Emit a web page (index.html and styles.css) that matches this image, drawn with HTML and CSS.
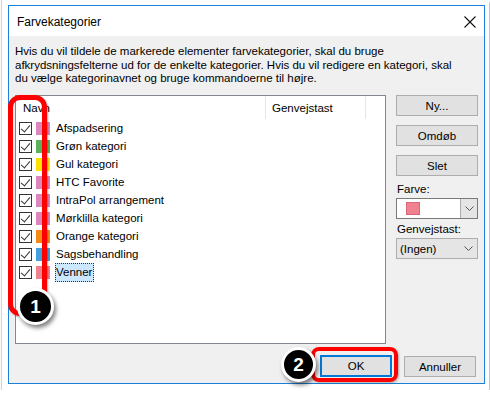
FILE: index.html
```html
<!DOCTYPE html>
<html lang="da">

<head>
    <meta charset="UTF-8" />
    <meta name="viewport" content="width=device-width, initial-scale=1.0" />
    <title>Farvekategorier</title>
    <link rel="stylesheet" href="styles.css">
</head>

<body>
    <div class="shot">
        <div class="dialog">
            <!-- Title bar -->
            <div class="titlebar">
                <span class="title">Farvekategorier</span>
                <svg class="close" width="12" height="12" viewBox="0 0 12 12">
                    <path d="M0.5 0.5 L11.5 11.5 M11.5 0.5 L0.5 11.5" stroke="#111" stroke-width="1.1" fill="none" />
                </svg>
            </div>

            <div class="content">
                <p class="intro">Hvis du vil tildele de markerede elementer farvekategorier, skal du bruge<br>
                    afkrydsningsfelterne ud for de enkelte kategorier. Hvis du vil redigere en kategori, skal<br>
                    du vælge kategorinavnet og bruge kommandoerne til højre.</p>

                <div class="main">
                    <!-- Category list -->
                    <div class="listbox">
                        <div class="list-header">
                            <span class="col-name">Navn</span>
                            <span class="col-key">Genvejstast</span>
                            <span class="col-rest"></span>
                        </div>
                        <ul class="rows">
                            <li class="row"><span class="check"></span><span class="swatch pink"></span><span class="label">Afspadsering</span></li>
                            <li class="row"><span class="check"></span><span class="swatch green"></span><span class="label">Grøn kategori</span></li>
                            <li class="row"><span class="check"></span><span class="swatch yellow"></span><span class="label">Gul kategori</span></li>
                            <li class="row"><span class="check"></span><span class="swatch pink"></span><span class="label">HTC Favorite</span></li>
                            <li class="row"><span class="check"></span><span class="swatch pink"></span><span class="label">IntraPol arrangement</span></li>
                            <li class="row"><span class="check"></span><span class="swatch pink"></span><span class="label">Mørklilla kategori</span></li>
                            <li class="row"><span class="check"></span><span class="swatch orange"></span><span class="label">Orange kategori</span></li>
                            <li class="row"><span class="check"></span><span class="swatch blue"></span><span class="label">Sagsbehandling</span></li>
                            <li class="row"><span class="check"></span><span class="swatch salmon"></span><span class="label selected">Venner</span></li>
                        </ul>
                    </div>

                    <!-- Commands -->
                    <div class="side">
                        <button class="btn">Ny...</button>
                        <button class="btn">Omdøb</button>
                        <button class="btn">Slet</button>
                        <label class="field-label">Farve:</label>
                        <div class="combo color-combo">
                            <span class="combo-value"><span class="swatch salmon big"></span></span>
                            <span class="combo-arrow boxed">
                                <svg width="9" height="5" viewBox="0 0 9 5"><path d="M0.5 0.5 L4.5 4.5 L8.5 0.5" stroke="#555" fill="none" /></svg>
                            </span>
                        </div>
                        <label class="field-label">Genvejstast:</label>
                        <div class="combo key-combo">
                            <span class="combo-value">(Ingen)</span>
                            <span class="combo-arrow">
                                <svg width="9" height="5" viewBox="0 0 9 5"><path d="M0.5 0.5 L4.5 4.5 L8.5 0.5" stroke="#555" fill="none" /></svg>
                            </span>
                        </div>
                    </div>
                </div>

                <div class="footer">
                    <button class="btn default">OK</button>
                    <button class="btn">Annuller</button>
                </div>
            </div>

            <!-- Annotation overlays -->
            <div class="mark mark-list"></div>
            <div class="badge badge-1">1</div>
            <div class="mark mark-ok"></div>
            <div class="badge badge-2">2</div>
        </div>
    </div>
</body>

</html>
```

FILE: styles.css
```css
/* General styling */
* {
    box-sizing: border-box;
}

body {
    margin: 0;
    background-color: #fff;
    font-family: "Liberation Sans", Arial, sans-serif;
    font-size: 11.5px;
    color: #000;
}

/* Screenshot frame */
.shot {
    width: 488px;
    height: 390px;
    margin-left: 1px;
    padding: 5px 5px 0 6px;
    border-left: 1px solid #d4d4d4;
    box-shadow: 1px 2px 2px rgba(0, 0, 0, 0.35);
    background-color: #fff;
}

.dialog {
    position: relative;
    width: 477px;
    height: 379px;
    border: 1px solid #1c7fd8;
    display: flex;
    flex-direction: column;
}

/* Title bar */
.titlebar {
    height: 30px;
    background-color: #fff;
    display: flex;
    align-items: center;
    justify-content: space-between;
    padding: 0 8px 0 8px;
}

.title {
    font-size: 12px;
    padding-top: 1px;
}

.close {
    margin-top: 1px;
}

/* Body */
.content {
    flex: 1;
    background-color: #f0f0f0;
    padding: 9px 6px 0 6px;
    display: flex;
    flex-direction: column;
}

.intro {
    margin: 0;
    line-height: 13.5px;
    height: 50px;
    white-space: nowrap;
}

.main {
    display: flex;
    gap: 10px;
}

/* List box */
.listbox {
    width: 371px;
    height: 249px;
    border: 1px solid #828790;
    background-color: #fff;
}

.list-header {
    display: flex;
    height: 23px;
    align-items: stretch;
}

.list-header span {
    display: flex;
    align-items: center;
}

.col-name {
    width: 250px;
    padding-left: 7px;
    border-right: 1px solid #e5e5e5;
}

.col-key {
    width: 100px;
    padding-left: 6px;
    border-right: 1px solid #e5e5e5;
}

.rows {
    list-style: none;
    margin: 0;
    padding: 0;
}

.row {
    height: 18px;
    display: flex;
    align-items: center;
    padding-left: 3px;
}

.check {
    width: 13px;
    height: 13px;
    border: 1px solid #333;
    background-color: #fff;
    position: relative;
    margin-right: 4px;
}

.check::after {
    content: "";
    position: absolute;
    left: 3px;
    top: 0px;
    width: 4px;
    height: 8px;
    border-right: 1px solid #333;
    border-bottom: 1px solid #333;
    transform: rotate(40deg);
}

.swatch {
    width: 14px;
    height: 13px;
    display: inline-block;
    margin-right: 5px;
}

.swatch.pink { background-color: #dc86bb; }
.swatch.green { background-color: #5cb15c; }
.swatch.yellow { background-color: #ffe100; }
.swatch.orange { background-color: #f78a14; }
.swatch.blue { background-color: #42a0dc; }
.swatch.salmon { background-color: #f0828f; }

.label {
    padding: 2px 1px 3px 0;
    border: 1px dotted transparent;
}

.label.selected {
    background-color: #cce8ff;
    border-color: #333;
}

/* Side commands */
.side {
    width: 82px;
    display: flex;
    flex-direction: column;
}

.btn {
    font-family: inherit;
    font-size: 11.5px;
    height: 21px;
    background-color: #e1e1e1;
    border: 1px solid #adadad;
    color: #000;
    padding: 0;
    margin-bottom: 9px;
}

.side .btn:nth-child(3) {
    margin-bottom: 4px;
}

.field-label {
    height: 18px;
    line-height: 18px;
    padding-left: 1px;
}

.combo {
    height: 21px;
    display: flex;
    border: 1px solid #7a7a7a;
    margin-bottom: 1px;
}

.color-combo {
    background-color: #fff;
}

.key-combo {
    background-color: #e5e5e5;
    border-color: #adadad;
}

.combo-value {
    flex: 1;
    display: flex;
    align-items: center;
    padding-left: 3px;
}

.swatch.big {
    width: 14px;
    height: 13px;
    margin-left: 6px;
    border: 1px solid #d9667a;
}

.combo-arrow {
    width: 17px;
    display: flex;
    align-items: center;
    justify-content: center;
}

.combo-arrow.boxed {
    background-color: #e5e5e5;
    border-left: 1px solid #adadad;
}

/* Footer */
.footer {
    display: flex;
    justify-content: flex-end;
    gap: 12px;
    padding-top: 12px;
    padding-right: 2px;
}

.footer .btn {
    width: 72px;
    margin: 0;
}

.btn.default {
    height: 22px;
    border: 2px solid #0078d7;
    margin-top: -1px;
}

/* Annotations */
.mark {
    position: absolute;
    border: 4px solid #f00;
    box-shadow: 1px 1px 2px rgba(0, 0, 0, 0.3);
}

.mark-list {
    left: -1px;
    top: 89px;
    width: 39px;
    height: 221px;
    border-width: 5px;
    border-radius: 12px;
}

.mark-ok {
    left: 302px;
    top: 341px;
    width: 87px;
    height: 35px;
    border-radius: 8px;
}

.badge {
    position: absolute;
    width: 37px;
    height: 37px;
    border-radius: 50%;
    background-color: #000;
    border: 3px solid #fff;
    color: #fff;
    font-family: "Liberation Sans", Arial, sans-serif;
    font-weight: bold;
    font-size: 19px;
    display: flex;
    align-items: center;
    justify-content: center;
    box-shadow: 2px 3px 4px rgba(0, 0, 0, 0.5);
}

.badge-1 {
    left: 8px;
    top: 282px;
}

.badge-2 {
    left: 272px;
    top: 341px;
    width: 35px;
    height: 35px;
}
```
